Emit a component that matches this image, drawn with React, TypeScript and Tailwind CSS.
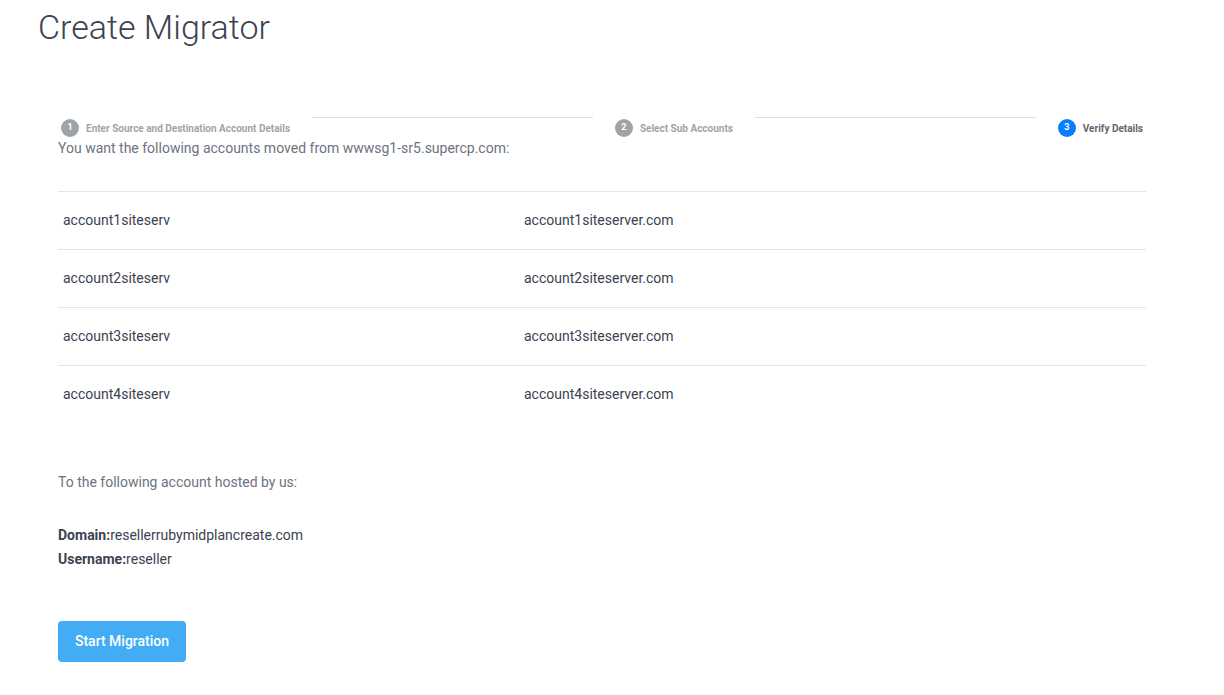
import React from 'react';

const accounts = [
  { user: 'account1siteserv', domain: 'account1siteserver.com' },
  { user: 'account2siteserv', domain: 'account2siteserver.com' },
  { user: 'account3siteserv', domain: 'account3siteserver.com' },
  { user: 'account4siteserv', domain: 'account4siteserver.com' },
];

function Step({ n, label, active }: { n: number; label: string; active?: boolean }) {
  return (
    <div className="flex items-center gap-[7px] shrink-0">
      <div
        className={`w-[18px] h-[18px] rounded-full flex items-center justify-center text-[9px] font-bold text-white ${
          active ? 'bg-[#0a7cff]' : 'bg-[#9ea3a8]'
        }`}
      >
        {n}
      </div>
      <span className={`text-[10px] font-bold ${active ? 'text-[#5f6670]' : 'text-[#a0a4aa]'}`}>{label}</span>
    </div>
  );
}

function Stepper() {
  return (
    <div className="flex items-start pl-[3px] pr-[3px]">
      <Step n={1} label="Enter Source and Destination Account Details" />
      <div className="flex-1 h-px bg-[#dcdfe3] mx-[22px] mt-[-2px]" />
      <Step n={2} label="Select Sub Accounts" />
      <div className="flex-1 h-px bg-[#dcdfe3] mx-[22px] mt-[-2px]" />
      <Step n={3} label="Verify Details" active />
    </div>
  );
}

export default function App() {
  return (
    <div className="min-h-screen bg-white" style={{ fontFamily: 'Roboto, "Liberation Sans", sans-serif' }}>
      <h1 className="pl-[38px] pt-[7px] text-[34px] leading-[40px] font-light text-[#3c4250]">Create Migrator</h1>

      <div className="pl-[58px] pr-[78px] pt-[72px]">
        <Stepper />
        <p className="text-[14px] leading-[20px] text-[#6c7380] mt-[1px]">
          You want the following accounts moved from wwwsg1-sr5.supercp.com:
        </p>

        <div className="mt-[33px]">
          {accounts.map((a) => (
            <div key={a.user} className="flex items-center h-[58px] border-t border-[#e3e5e8] text-[14px] text-[#3c4250]">
              <div className="w-[466px] pl-[5px]">{a.user}</div>
              <div>{a.domain}</div>
            </div>
          ))}
        </div>

        <p className="mt-[49px] text-[14px] leading-[20px] text-[#6c7380]">To the following account hosted by us:</p>

        <div className="mt-[31px] text-[14px] leading-[24px] text-[#3c4250]">
          <div>
            <span className="font-bold">Domain:</span>resellerrubymidplancreate.com
          </div>
          <div>
            <span className="font-bold">Username:</span>reseller
          </div>
        </div>

        <button className="mt-[50px] w-[128px] h-[41px] rounded-[4px] bg-[#42adf5] text-white text-[14px] font-medium">
          Start Migration
        </button>
      </div>
    </div>
  );
}
